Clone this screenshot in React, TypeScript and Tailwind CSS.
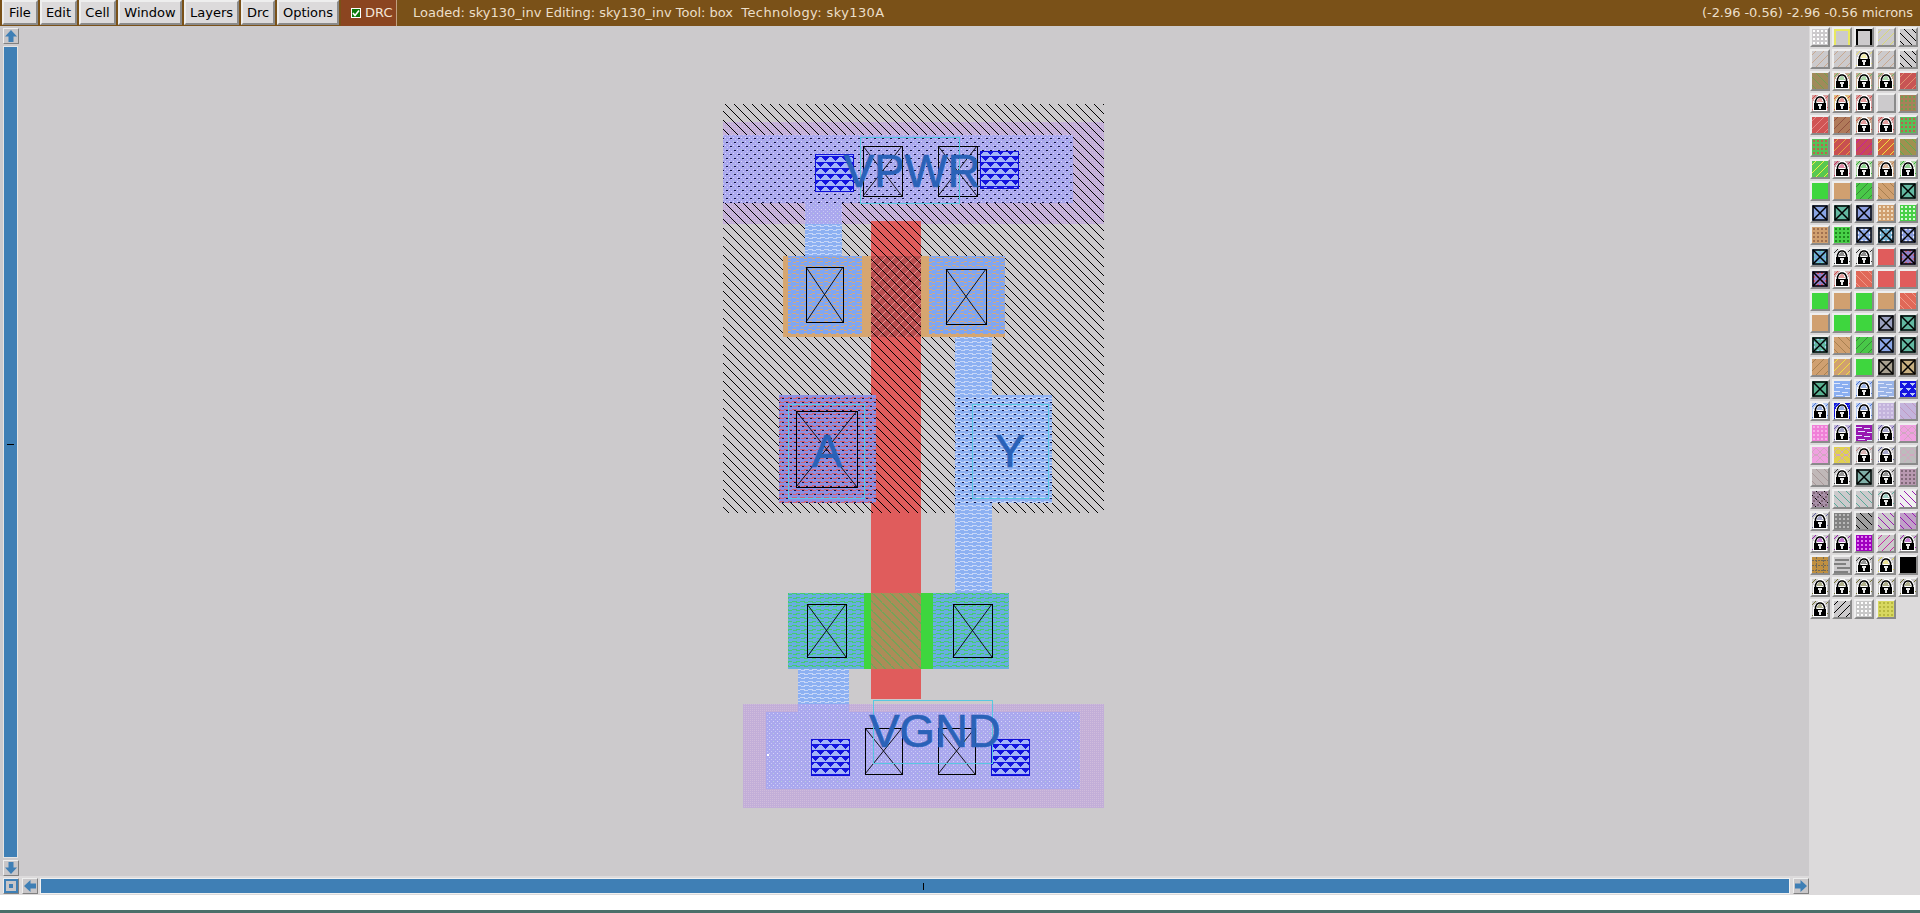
type TileSpec = {
  bg?: string;
  hatch?: string;
  dir?: 'f' | 'b';
  dots?: string;
  cross?: boolean;
  lock?: boolean;
  extra?: string;
};

const GRAY = '#cccacc';
const RED = '#e05c5c';
const GREEN = '#3ed63e';
const TAN = '#d0a070';
const BLUE = '#8aa6e6';
const TEAL = '#62b8a0';

const lock = (bg: string = GRAY, extra?: string): TileSpec => ({ bg, lock: true, extra });
const f = (bg: string, hatch: string): TileSpec => ({ bg, hatch, dir: 'f' });
const b = (bg: string, hatch: string): TileSpec => ({ bg, hatch, dir: 'b' });
const solid = (bg: string): TileSpec => ({ bg });
const dots = (bg: string, color: string): TileSpec => ({ bg, dots: color });
const cross = (bg: string, dotColor?: string): TileSpec => ({ bg, cross: true, dots: dotColor });

const tiles: TileSpec[][] = [
  [dots(GRAY, '#ffffff'), { bg: GRAY, extra: 'yellow' }, { bg: GRAY, extra: 'black' }, f(GRAY, '#d8d878'), b(GRAY, '#000000')],
  [f(GRAY, '#c8a890'), f(GRAY, '#c8a890'), lock(GRAY, '#e8e070'), f(GRAY, '#c8a890'), b(GRAY, '#000000')],
  [b('#a08a5a', '#70a050'), lock('#c8a890', '#68b868'), lock('#c8a890', '#68b868'), lock('#c8a890', '#68b868'), f('#c85454', '#e09070')],
  [lock('#d8a0a0', '#d05050'), lock('#e0c080', '#d05050'), lock('#d8a0a0', '#d05050'), solid(GRAY), dots('#a8805a', '#70a050')],
  [f('#d05454', '#e88888'), f('#b07a5a', '#905040'), lock('#c8a890', '#d05050'), lock('#d8a0a0', '#d05050'), dots('#58c058', '#c06050')],
  [dots('#58c058', '#c06050'), f('#c85050', '#e8a040'), f('#c84858', '#c820a0'), f('#d06040', '#f0e040'), b('#a09050', '#58b050')],
  [f('#58c850', '#f0f040'), lock('#c8a0a8', '#c83060'), lock('#b0d8a8', '#38b038'), lock('#d0b090', '#c08050'), lock('#b0d8a8', '#38b038')],
  [solid(GREEN), solid(TAN), f('#48c848', '#388838'), b(TAN, '#a88050'), cross(TEAL)],
  [cross(BLUE), cross(TEAL), cross('#8c9ee0'), dots(TAN, '#f0dcc0'), dots('#48d048', '#d8f8d8')],
  [dots(TAN, '#a07050'), dots('#48d048', '#208820'), cross(BLUE, '#e0e8ff'), cross('#70b0d0', '#e0e8ff'), cross('#8c9ee0', '#e0e8ff')],
  [cross('#70a8d8', '#70d0c0'), lock('#e0e0e0', '#303030'), lock('#e0e0e0', '#303030'), solid(RED), cross('#9080c8', '#c06070')],
  [cross('#9080c8', '#d05060'), lock('#d8b0b0', '#d05050'), b('#e06858', '#f09888'), solid(RED), solid(RED)],
  [solid(GREEN), solid(TAN), solid(GREEN), solid(TAN), b('#e06858', '#f09888')],
  [solid(TAN), solid(GREEN), solid(GREEN), cross('#9aa0c0'), cross(TEAL)],
  [cross(TEAL, '#a0d0f0'), b(TAN, '#a88050'), f('#48c848', '#388838'), cross(BLUE), cross(TEAL)],
  [f(TAN, '#a88050'), f(TAN, '#f0e040'), solid(GREEN), cross('#a8a090'), cross('#c8b080')],
  [cross('#58b090'), { bg: '#8aaef0', extra: 'waves' }, lock('#b8ccf4', '#5078d0'), { bg: '#9ab4e8', extra: 'waves' }, { bg: '#1414e0', extra: 'tri' }],
  [lock('#b8ccf4', '#5078d0'), lock('#1818e0', '#5078d0'), lock('#b8ccf4', '#5078d0'), dots('#c4b4dc', '#d8ccea'), b('#c4b4dc', '#c098c0')],
  [dots('#f080d8', '#f8b0e8'), lock('#c4b4dc', '#6060a0'), { bg: '#9818b0', extra: 'waves' }, lock('#c4b4dc', '#6060a0'), { bg: '#f0a0e0', extra: 'rings' }],
  [{ bg: '#f0a0e0', extra: 'rings' }, { bg: '#e0d050', extra: 'rings' }, lock(GRAY, '#c08080'), lock(GRAY, '#6060a0'), { bg: '#bcbcbc', extra: 'rings' }],
  [b('#c0b8b8', '#a89898'), lock(GRAY, '#404040'), cross('#80b0a8'), lock(GRAY, '#404040'), dots('#b898b0', '#806878')],
  [{ bg: '#a890a8', hatch: '#000000', dir: 'b', dots: '#806878' }, b(GRAY, '#58a898'), b(GRAY, '#58a898'), lock(GRAY, '#58a898'), b('#f0f0f0', '#9818b0')],
  [lock(GRAY, '#6060a0'), dots('#808080', '#b8b8b8'), b('#a0a0a0', '#000000'), b(GRAY, '#9818b0'), b('#c0a0c8', '#9818b0')],
  [lock(GRAY, '#9818b0'), lock(GRAY, '#9818b0'), dots('#a000c0', '#e080f0'), f(GRAY, '#c828a0'), lock(GRAY, '#9818b0')],
  [{ bg: '#c09040', extra: 'grid' }, { bg: GRAY, extra: 'gstripes' }, lock(GRAY, '#404040'), lock(GRAY, '#d8c840'), solid('#000000')],
  [lock(GRAY, '#707030'), lock(GRAY, '#707030'), lock(GRAY, '#707030'), lock(GRAY, '#707030'), lock(GRAY, '#707030')],
  [lock(GRAY, '#707030'), f(GRAY, '#000000'), dots('#c8c8c8', '#ffffff'), dots('#d8d860', '#b8b840')],
];

function LayerTile({ spec }: { spec: TileSpec }) {
  const { bg = GRAY, hatch, dir, dots: dotColor, cross: hasCross, lock: hasLock, extra } = spec;
  return (
    <div className="w-[20px] h-[20px] border-2 border-t-[#eeeeee] border-l-[#eeeeee] border-r-[#8a8a8a] border-b-[#8a8a8a]">
      <svg width="16" height="16" viewBox="0 0 16 16" shapeRendering="crispEdges">
        <rect width="16" height="16" fill={bg} />
        {hatch && dir === 'f' && (
          <path d="M-2 6L6 -2M-2 14L14 -2M2 18L18 2M10 18L18 10" stroke={hatch} strokeWidth="1" shapeRendering="auto" />
        )}
        {hatch && dir === 'b' && (
          <path d="M-2 10L6 18M-2 2L14 18M2 -2L18 14M10 -2L18 6" stroke={hatch} strokeWidth="1" shapeRendering="auto" />
        )}
        {dotColor &&
          [2, 6, 10, 14].map((y) =>
            [2, 6, 10, 14].map((x) => <rect key={`${x}-${y}`} x={x - 1} y={y - 1} width="2" height="2" fill={dotColor} />),
          )}
        {extra === 'yellow' && <path d="M1 16V1H15V16" stroke="#e8e860" strokeWidth="2" fill="none" />}
        {extra === 'black' && <path d="M1 16V1H15V16" stroke="#000000" strokeWidth="1.5" fill="none" />}
        {extra === 'waves' && (
          <path d="M0 2H6M8 3H14M2 6H9M11 7H16M0 10H6M8 11H14M2 14H9M11 15H16" stroke="#e0e8fc" strokeWidth="1" />
        )}
        {extra === 'tri' && (
          <path d="M1 2H7L4 5ZM9 2H15L12 5ZM5 7H11L8 10ZM-3 7H3L0 10ZM13 7H19L16 10ZM1 12H7L4 15ZM9 12H15L12 15Z" fill="#b8c8f8" />
        )}
        {extra === 'rings' && (
          <path d="M4 1L8 5L12 1M4 1L0 5L4 9L8 5L12 9L16 5L12 1M4 15L8 11L12 15M0 11L4 7L8 11L12 7L16 11" stroke="#d0a8c0" fill="none" />
        )}
        {extra === 'grid' && <path d="M0 3H16M0 8H16M0 13H16M4 0V16M11 0V16" stroke="#706858" strokeDasharray="2 1" />}
        {extra === 'gstripes' && <path d="M1 3H15M0 7H12M3 11H16M0 15H14" stroke="#808080" strokeWidth="2" />}
        {hasCross && (
          <g shapeRendering="auto">
            <rect x="1" y="1" width="14" height="14" fill="none" stroke="#000000" strokeWidth="1.5" />
            <path d="M1 1L15 15M15 1L1 15" stroke="#000000" strokeWidth="1.5" />
          </g>
        )}
        {hasLock && (
          <g>
            {!['yellow', 'black'].includes(extra ?? '') && extra && (
              <path d="M-1 5L5 -1M11 17L17 11M0 15L2 13M14 3L16 1" stroke={extra} strokeWidth="1" shapeRendering="auto" />
            )}
            <path d="M1 16V7L3 3L6 0H10L13 3L15 7V16Z" fill="#ffffff" />
            <path d="M3.5 8V6L5 3L7 2H9L11 3L12.5 6V8" fill="none" stroke="#000000" strokeWidth="1.6" shapeRendering="auto" />
            <path d="M5 7L6 4L8 3L10 4L11 7Z" fill={extra && extra !== 'yellow' ? extra : bg} opacity="0.55" />
            <rect x="2" y="8" width="12" height="7" fill="#000000" />
            <rect x="6" y="9" width="4" height="2" fill="#e8e8e8" />
            <rect x="7" y="11" width="2" height="3" fill="#e8e8e8" />
          </g>
        )}
      </svg>
    </div>
  );
}

function ArrowButton({ dir, className = '' }: { dir: 'up' | 'down' | 'left' | 'right'; className?: string }) {
  const rotate = { up: 0, right: 90, down: 180, left: 270 }[dir];
  return (
    <div className={`w-[16px] h-[16px] bg-[#c8c6c8] border border-t-[#eeeeee] border-l-[#eeeeee] border-r-[#808080] border-b-[#808080] ${className}`}>
      <svg width="14" height="14" viewBox="0 0 14 14">
        <path transform={`rotate(${rotate} 7 7)`} d="M7 1L13 7.5H9.5V13H4.5V7.5H1Z" fill="#3f7fb5" />
      </svg>
    </div>
  );
}

const Box = ({ x1, y1, x2, y2, fill, stroke }: { x1: number; y1: number; x2: number; y2: number; fill?: string; stroke?: string }) => (
  <rect x={x1 + (stroke ? 0.5 : 0)} y={y1 + (stroke ? 0.5 : 0)} width={x2 - x1} height={y2 - y1} fill={fill ?? 'none'} stroke={stroke} />
);

const Contact = ({ x1, y1, x2, y2 }: { x1: number; y1: number; x2: number; y2: number }) => (
  <g stroke="#000000" fill="none">
    <rect x={x1 + 0.5} y={y1 + 0.5} width={x2 - x1} height={y2 - y1} />
    <path d={`M${x1} ${y1}L${x2} ${y2}M${x2} ${y1}L${x1} ${y2}`} shapeRendering="auto" strokeWidth="0.9" />
  </g>
);

const Label = ({ x, y, children }: { x: number; y: number; children: string }) => (
  <text x={x} y={y} textAnchor="middle" fontFamily="'Liberation Sans', Arial, sans-serif" fontSize="45.5" fill="#2a62b8" stroke="#2a62b8" strokeWidth="0.7">
    {children}
  </text>
);

// stipple patterns of the layout layers
function Patterns() {
  const diag = [0, 1, 2, 3, 4, 5, 6, 7, 8];
  return (
    <defs>
      <pattern id="hatch" width="9" height="9" patternUnits="userSpaceOnUse">
        {diag.map((i) => <rect key={i} x={i} y={i} width="1" height="1" fill="#000000" />)}
      </pattern>
      <pattern id="nwell" width="2" height="2" patternUnits="userSpaceOnUse">
        <rect width="2" height="2" fill="#c2aed8" />
        <rect width="1" height="1" fill="#d0bcdc" />
      </pattern>
      <pattern id="lav" width="8" height="8" patternUnits="userSpaceOnUse">
        <rect width="8" height="8" fill="#aaa8ee" />
        <rect x="1" y="1" width="1" height="1" fill="#d8d4f8" />
        <rect x="5" y="1" width="1" height="1" fill="#d8d4f8" />
        <rect x="3" y="3" width="1" height="1" fill="#c8c8f4" />
        <rect x="7" y="3" width="1" height="1" fill="#c8c8f4" />
        <rect x="1" y="5" width="1" height="1" fill="#d8d4f8" />
        <rect x="5" y="5" width="1" height="1" fill="#b8d0d8" />
        <rect x="3" y="7" width="1" height="1" fill="#c8c8f4" />
        <rect x="7" y="7" width="1" height="1" fill="#c8c8f4" />
      </pattern>
      <pattern id="lavdots" width="8" height="8" patternUnits="userSpaceOnUse">
        <rect x="2" y="2" width="2" height="1" fill="#101040" />
        <rect x="6" y="6" width="2" height="1" fill="#101040" />
      </pattern>
      <pattern id="metal" width="8" height="8" patternUnits="userSpaceOnUse">
        <rect width="8" height="8" fill="#8cb0f2" />
        <rect x="0" y="1" width="5" height="1" fill="#c6d6f8" />
        <rect x="4" y="2" width="4" height="1" fill="#c6d6f8" />
        <rect x="0" y="5" width="1" height="1" fill="#c6d6f8" />
        <rect x="4" y="5" width="4" height="1" fill="#c6d6f8" />
        <rect x="1" y="6" width="4" height="1" fill="#c6d6f8" />
      </pattern>
      <pattern id="metalTan" width="8" height="8" patternUnits="userSpaceOnUse">
        <rect width="8" height="8" fill="#7fa6f2" />
        <rect x="0" y="1" width="4" height="1" fill="#cfa884" />
        <rect x="4" y="2" width="3" height="1" fill="#cfa884" />
        <rect x="4" y="5" width="3" height="1" fill="#cfa884" />
        <rect x="1" y="6" width="3" height="1" fill="#cfa884" />
      </pattern>
      <pattern id="metalGreen" width="8" height="8" patternUnits="userSpaceOnUse">
        <rect width="8" height="8" fill="#68aee0" />
        <rect x="0" y="1" width="5" height="1" fill="#44cc70" />
        <rect x="4" y="2" width="4" height="1" fill="#44cc70" />
        <rect x="4" y="5" width="4" height="1" fill="#44cc70" />
        <rect x="1" y="6" width="4" height="1" fill="#44cc70" />
      </pattern>
      <pattern id="metalRed" width="8" height="8" patternUnits="userSpaceOnUse">
        <rect width="8" height="8" fill="#8a90e4" />
        <rect x="0" y="1" width="5" height="1" fill="#d06478" />
        <rect x="4" y="2" width="4" height="1" fill="#d06478" />
        <rect x="4" y="5" width="4" height="1" fill="#d06478" />
        <rect x="1" y="6" width="4" height="1" fill="#d06478" />
      </pattern>
      <pattern id="polyHatch" width="9" height="9" patternUnits="userSpaceOnUse">
        <rect width="9" height="9" fill="#b84e50" />
        {diag.map((i) => <rect key={i} x={8 - i} y={i} width="1" height="1" fill="#e89090" />)}
      </pattern>
      <pattern id="fet" width="9" height="9" patternUnits="userSpaceOnUse">
        <rect width="9" height="9" fill="#ac8c58" />
        {diag.map((i) => <rect key={i} x={i} y={i} width="2" height="1" fill="#74a458" />)}
      </pattern>
      <pattern id="via" width="10" height="12" patternUnits="userSpaceOnUse">
        <rect width="10" height="12" fill="#a4b4f8" />
        <path d="M0 0H10L5 5ZM-5 6H5L0 11ZM5 6H15L10 11Z" fill="#1414e0" />
        <rect y="0" width="10" height="1" fill="#1414e0" />
        <rect y="6" width="10" height="1" fill="#1414e0" />
      </pattern>
    </defs>
  );
}

function LayoutDrawing() {
  return (
    <svg width="1788" height="851" className="block" shapeRendering="crispEdges">
      <Patterns />
      <g transform="translate(-21 -26)">
        {/* nwell hatch and VPWR strap */}
        <Box x1={723} y1={122} x2={1104} y2={224} fill="url(#nwell)" />
        <rect x={723} y={104} width={381} height={409} fill="url(#hatch)" />
        <Box x1={871} y1={221} x2={921} y2={699} fill="#e05c5c" />
        <rect x={871} y={221} width={50} height={292} fill="url(#hatch)" />
        <Box x1={723} y1={135} x2={1073} y2={203} fill="url(#lav)" />
        <rect x={723} y={135} width={350} height={68} fill="url(#lavdots)" />
        <Box x1={805} y1={203} x2={842} y2={224} fill="url(#lav)" />
        <Box x1={805} y1={224} x2={842} y2={256} fill="url(#metal)" />

        {/* pfet */}
        <Box x1={783} y1={256} x2={871} y2={337} fill="#d6a670" />
        <Box x1={921} y1={256} x2={1005} y2={337} fill="#d6a670" />
        <Box x1={788} y1={256} x2={862} y2={334} fill="url(#metalTan)" />
        <Box x1={929} y1={256} x2={1005} y2={334} fill="url(#metalTan)" />
        <Box x1={871} y1={256} x2={921} y2={337} fill="url(#polyHatch)" />
        <rect x={871} y={256} width={50} height={81} fill="url(#hatch)" />
        <Contact x1={806} y1={267} x2={843} y2={322} />
        <Contact x1={946} y1={269} x2={986} y2={324} />

        {/* output strap and pins */}
        <Box x1={955} y1={337} x2={992} y2={593} fill="url(#metal)" />
        <Box x1={955} y1={395} x2={1052} y2={503} fill="url(#metal)" />
        <rect x={955} y={395} width={97} height={108} fill="url(#lavdots)" />
        <Box x1={972} y1={404} x2={1048} y2={498} stroke="#58c8e0" />
        <Box x1={779} y1={395} x2={876} y2={503} fill="url(#metalRed)" />
        <rect x={779} y={395} width={97} height={108} fill="url(#lavdots)" />
        <Box x1={788} y1={404} x2={864} y2={498} stroke="#58c8e0" />
        <Contact x1={796} y1={411} x2={857} y2={487} />
        <Label x={827} y={467}>A</Label>
        <Label x={1010} y={467}>Y</Label>

        {/* nfet */}
        <Box x1={798} y1={669} x2={849} y2={712} fill="url(#metal)" />
        <Box x1={788} y1={593} x2={864} y2={669} fill="url(#metalGreen)" />
        <Box x1={933} y1={593} x2={1009} y2={669} fill="url(#metalGreen)" />
        <Box x1={864} y1={593} x2={871} y2={669} fill="#3ed63e" />
        <Box x1={921} y1={593} x2={933} y2={669} fill="#3ed63e" />
        <Box x1={871} y1={593} x2={921} y2={669} fill="url(#fet)" />
        <Contact x1={807} y1={604} x2={846} y2={657} />
        <Contact x1={953} y1={604} x2={992} y2={657} />

        {/* VGND strap */}
        <Box x1={743} y1={704} x2={1104} y2={808} fill="url(#nwell)" />
        <Box x1={798} y1={704} x2={849} y2={712} fill="url(#lav)" />
        <Box x1={766} y1={712} x2={1080} y2={789} fill="url(#lav)" />
        <Box x1={811} y1={739} x2={849} y2={775} fill="url(#via)" stroke="#1010d8" />
        <Box x1={991} y1={739} x2={1029} y2={775} fill="url(#via)" stroke="#1010d8" />
        <Contact x1={865} y1={728} x2={902} y2={774} />
        <Contact x1={938} y1={728} x2={975} y2={774} />
        <Box x1={873} y1={700} x2={992} y2={763} stroke="#58c8e0" />
        <Box x1={767} y1={754} x2={769} y2={756} fill="#ffffff" />
        <Label x={935} y={747}>VGND</Label>

        {/* VPWR contacts and label */}
        <Box x1={815} y1={154} x2={853} y2={191} fill="url(#via)" stroke="#1010d8" />
        <Box x1={980} y1={151} x2={1018} y2={188} fill="url(#via)" stroke="#1010d8" />
        <Contact x1={863} y1={146} x2={902} y2={196} />
        <Contact x1={938} y1={146} x2={977} y2={196} />
        <Box x1={860} y1={137} x2={959} y2={203} stroke="#58c8e0" />
        <Label x={912} y={187}>VPWR</Label>
      </g>
    </svg>
  );
}

const menus = [
  ['File', 'w-[36px]'],
  ['Edit', 'w-[37px]'],
  ['Cell', 'w-[37px]'],
  ['Window', 'w-[64px]'],
  ['Layers', 'w-[55px]'],
  ['Drc', 'w-[34px]'],
  ['Options', 'w-[62px]'],
];

export default function App() {
  return (
    <div className="w-[1920px] h-[913px] overflow-hidden flex flex-col bg-white font-['DejaVu_Sans',sans-serif] text-[13px]">
      <header className="h-[26px] shrink-0 flex items-stretch bg-[#7a5118] pl-[2px]">
        <div className="flex gap-[2px]">
          {menus.map(([label, width]) => (
            <button
              key={label}
              className={`${width} h-[25px] bg-[#dcdadb] text-black text-center border-2 border-t-[#eeeeee] border-l-[#eeeeee] border-r-[#8a8a8a] border-b-[#8a8a8a]`}
            >
              {label}
            </button>
          ))}
          <div className="w-[56px] bg-[#8b4520] flex items-center gap-[4px] pl-[10px] text-[#f4e6d8] border-r border-[#c0a080]">
            <span className="w-[10px] h-[10px] bg-[#0a7a0a] border border-white flex items-center justify-center">
              <svg width="8" height="8" viewBox="0 0 8 8">
                <path d="M1 4L3 6.5L7 1.5" stroke="#ffffff" strokeWidth="1.6" fill="none" />
              </svg>
            </span>
            DRC
          </div>
        </div>
        <div className="flex-1 flex items-center justify-between pl-[16px] pr-[7px] text-[#ecdfc8]">
          <span className="whitespace-pre">
            Loaded: sky130_inv Editing: sky130_inv Tool: box  <span className="tracking-[0.4px]">Technology: sky130A</span>
          </span>
          <span className="tracking-[-0.05px]">(-2.96 -0.56) -2.96 -0.56 microns</span>
        </div>
      </header>

      <div className="h-[869px] shrink-0 flex">
        <div className="w-[1809px] flex flex-col">
          <div className="h-[850px] flex">
            <div className="w-[21px] shrink-0 bg-[#cccacc] flex flex-col pl-[3px] pt-[2px] gap-[2px]">
              <ArrowButton dir="up" />
              <div className="w-[15px] flex-1 bg-[#3f7fb5] border border-[#e4e4e4] flex flex-col items-center pt-[397px]">
                <span className="w-[7px] h-[1px] bg-black" />
              </div>
              <ArrowButton dir="down" />
            </div>
            <main className="flex-1 bg-[#cccacc] overflow-hidden">
              <LayoutDrawing />
            </main>
          </div>
          <div className="h-[19px] flex items-start gap-[2px] pl-[3px] pt-[2px] bg-[#dcdadb]">
            <div className="w-[16px] h-[16px] bg-[#3f7fb5] border border-t-[#eeeeee] border-l-[#eeeeee] border-r-[#808080] border-b-[#808080] flex items-center justify-center">
              <span className="w-[10px] h-[10px] bg-[#c8c6c8] border-2 border-[#c8c6c8] flex items-center justify-center">
                <span className="w-[4px] h-[4px] bg-[#3f7fb5]" />
              </span>
            </div>
            <ArrowButton dir="left" className="ml-[1px]" />
            <div className="w-[1750px] h-[16px] bg-[#3f7fb5] border border-[#f0f0f0] flex items-center pl-[882px]">
              <span className="w-[1px] h-[7px] bg-black" />
            </div>
            <ArrowButton dir="right" className="ml-[1px]" />
          </div>
        </div>
        <aside className="flex-1 bg-[#dcdadb] pl-[1px] pt-[1px]">
          <div className="grid grid-cols-5 gap-[2px] w-[108px]">
            {tiles.flat().map((spec, i) => (
              <LayerTile key={i} spec={spec} />
            ))}
          </div>
        </aside>
      </div>

      <div className="flex-1 bg-white" />
      <div className="h-[3px] shrink-0 bg-[#4a6f6a]" />
    </div>
  );
}
